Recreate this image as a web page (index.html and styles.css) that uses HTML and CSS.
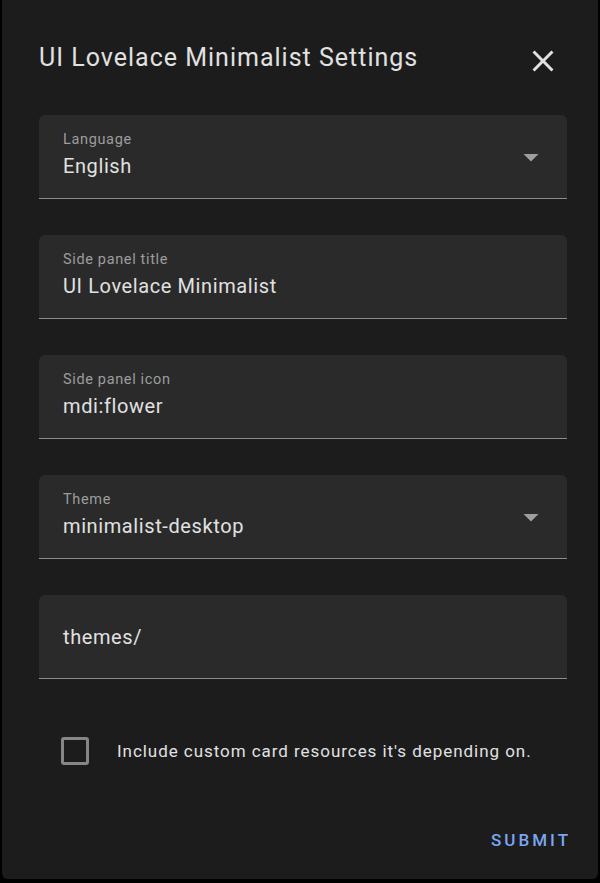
FILE: index.html
```html
<!DOCTYPE html>
<html>
<head>
<meta charset="utf-8">
<link rel="stylesheet" href="styles.css">
</head>
<body>
<div class="dialog">
  <div class="header">
    <h2 class="title">UI Lovelace Minimalist Settings</h2>
    <svg class="close" viewBox="0 0 24 24"><path d="M19,6.41L17.59,5L12,10.59L6.41,5L5,6.41L10.59,12L5,17.59L6.41,19L12,13.41L17.59,19L19,17.59L13.41,12L19,6.41Z"/></svg>
  </div>
  <div class="fields">
    <div class="field">
      <div class="content">
        <div class="label">Language</div>
        <div class="value">English</div>
      </div>
      <svg class="arrow" viewBox="0 0 24 24"><path d="M7,10L12,15L17,10H7Z"/></svg>
    </div>
    <div class="field">
      <div class="content">
        <div class="label">Side panel title</div>
        <div class="value">UI Lovelace Minimalist</div>
      </div>
    </div>
    <div class="field">
      <div class="content">
        <div class="label">Side panel icon</div>
        <div class="value">mdi:flower</div>
      </div>
    </div>
    <div class="field">
      <div class="content">
        <div class="label">Theme</div>
        <div class="value">minimalist-desktop</div>
      </div>
      <svg class="arrow" viewBox="0 0 24 24"><path d="M7,10L12,15L17,10H7Z"/></svg>
    </div>
    <div class="field">
      <div class="content">
        <div class="value only">themes/</div>
      </div>
    </div>
  </div>
  <div class="check-row">
    <span class="checkbox"></span>
    <span class="check-label">Include custom card resources it's depending on.</span>
  </div>
  <div class="actions">
    <button class="submit">SUBMIT</button>
  </div>
</div>
</body>
</html>
```
FILE: styles.css
```css
html, body {
  margin: 0;
  padding: 0;
  background: #000;
  font-family: Roboto, "Liberation Sans", sans-serif;
}
.dialog {
  box-sizing: border-box;
  width: 596px;
  height: 879px;
  margin-left: 2px;
  background: #1c1c1c;
  border-radius: 0 0 6px 6px;
  padding: 0 31px 0 37px;
  display: flex;
  flex-direction: column;
}
.header {
  display: flex;
  align-items: center;
  justify-content: space-between;
  padding-top: 42px;
  height: 32px;
  margin-bottom: 41px;
}
.title {
  margin: 0;
  font-size: 25px;
  font-weight: 400;
  line-height: 32px;
  letter-spacing: 1px;
  color: #e1e1e1;
}
.close {
  width: 36px;
  height: 36px;
  fill: #e1e1e1;
  margin-right: 6px;
  margin-top: 6px;
}
.fields {
  display: flex;
  flex-direction: column;
  gap: 36px;
}
.field {
  box-sizing: border-box;
  height: 84px;
  background: #2a2a2a;
  border-radius: 6px 6px 0 0;
  border-bottom: 1px solid #8c8c8c;
  padding: 0 18px 0 24px;
  display: flex;
  align-items: center;
}
.content {
  flex: 1;
  display: flex;
  flex-direction: column;
}
.label {
  font-size: 14.5px;
  line-height: 18px;
  letter-spacing: 0.65px;
  color: #9d9d9d;
  margin-top: -3px;
}
.value {
  font-size: 20px;
  line-height: 26px;
  letter-spacing: 0.6px;
  color: #e1e1e1;
  margin-top: 4px;
}
.value.only {
  margin-top: 0;
}
.arrow {
  width: 36px;
  height: 36px;
  fill: #9e9e9e;
}
.check-row {
  display: flex;
  align-items: center;
  margin-top: 58px;
  padding-left: 22px;
  gap: 28px;
}
.checkbox {
  box-sizing: border-box;
  width: 28px;
  height: 28px;
  border: 3px solid #868686;
  border-radius: 3px;
}
.check-label {
  font-size: 17px;
  color: #e1e1e1;
  letter-spacing: 0.95px;
}
.actions {
  display: flex;
  justify-content: flex-end;
  margin-top: 63px;
}
.submit {
  background: none;
  border: none;
  padding: 0;
  font-family: Roboto, "Liberation Sans", sans-serif;
  font-size: 17px;
  font-weight: 500;
  letter-spacing: 3px;
  color: #7aa7f2;
  line-height: 24px;
  margin-right: -4px;
}
```
